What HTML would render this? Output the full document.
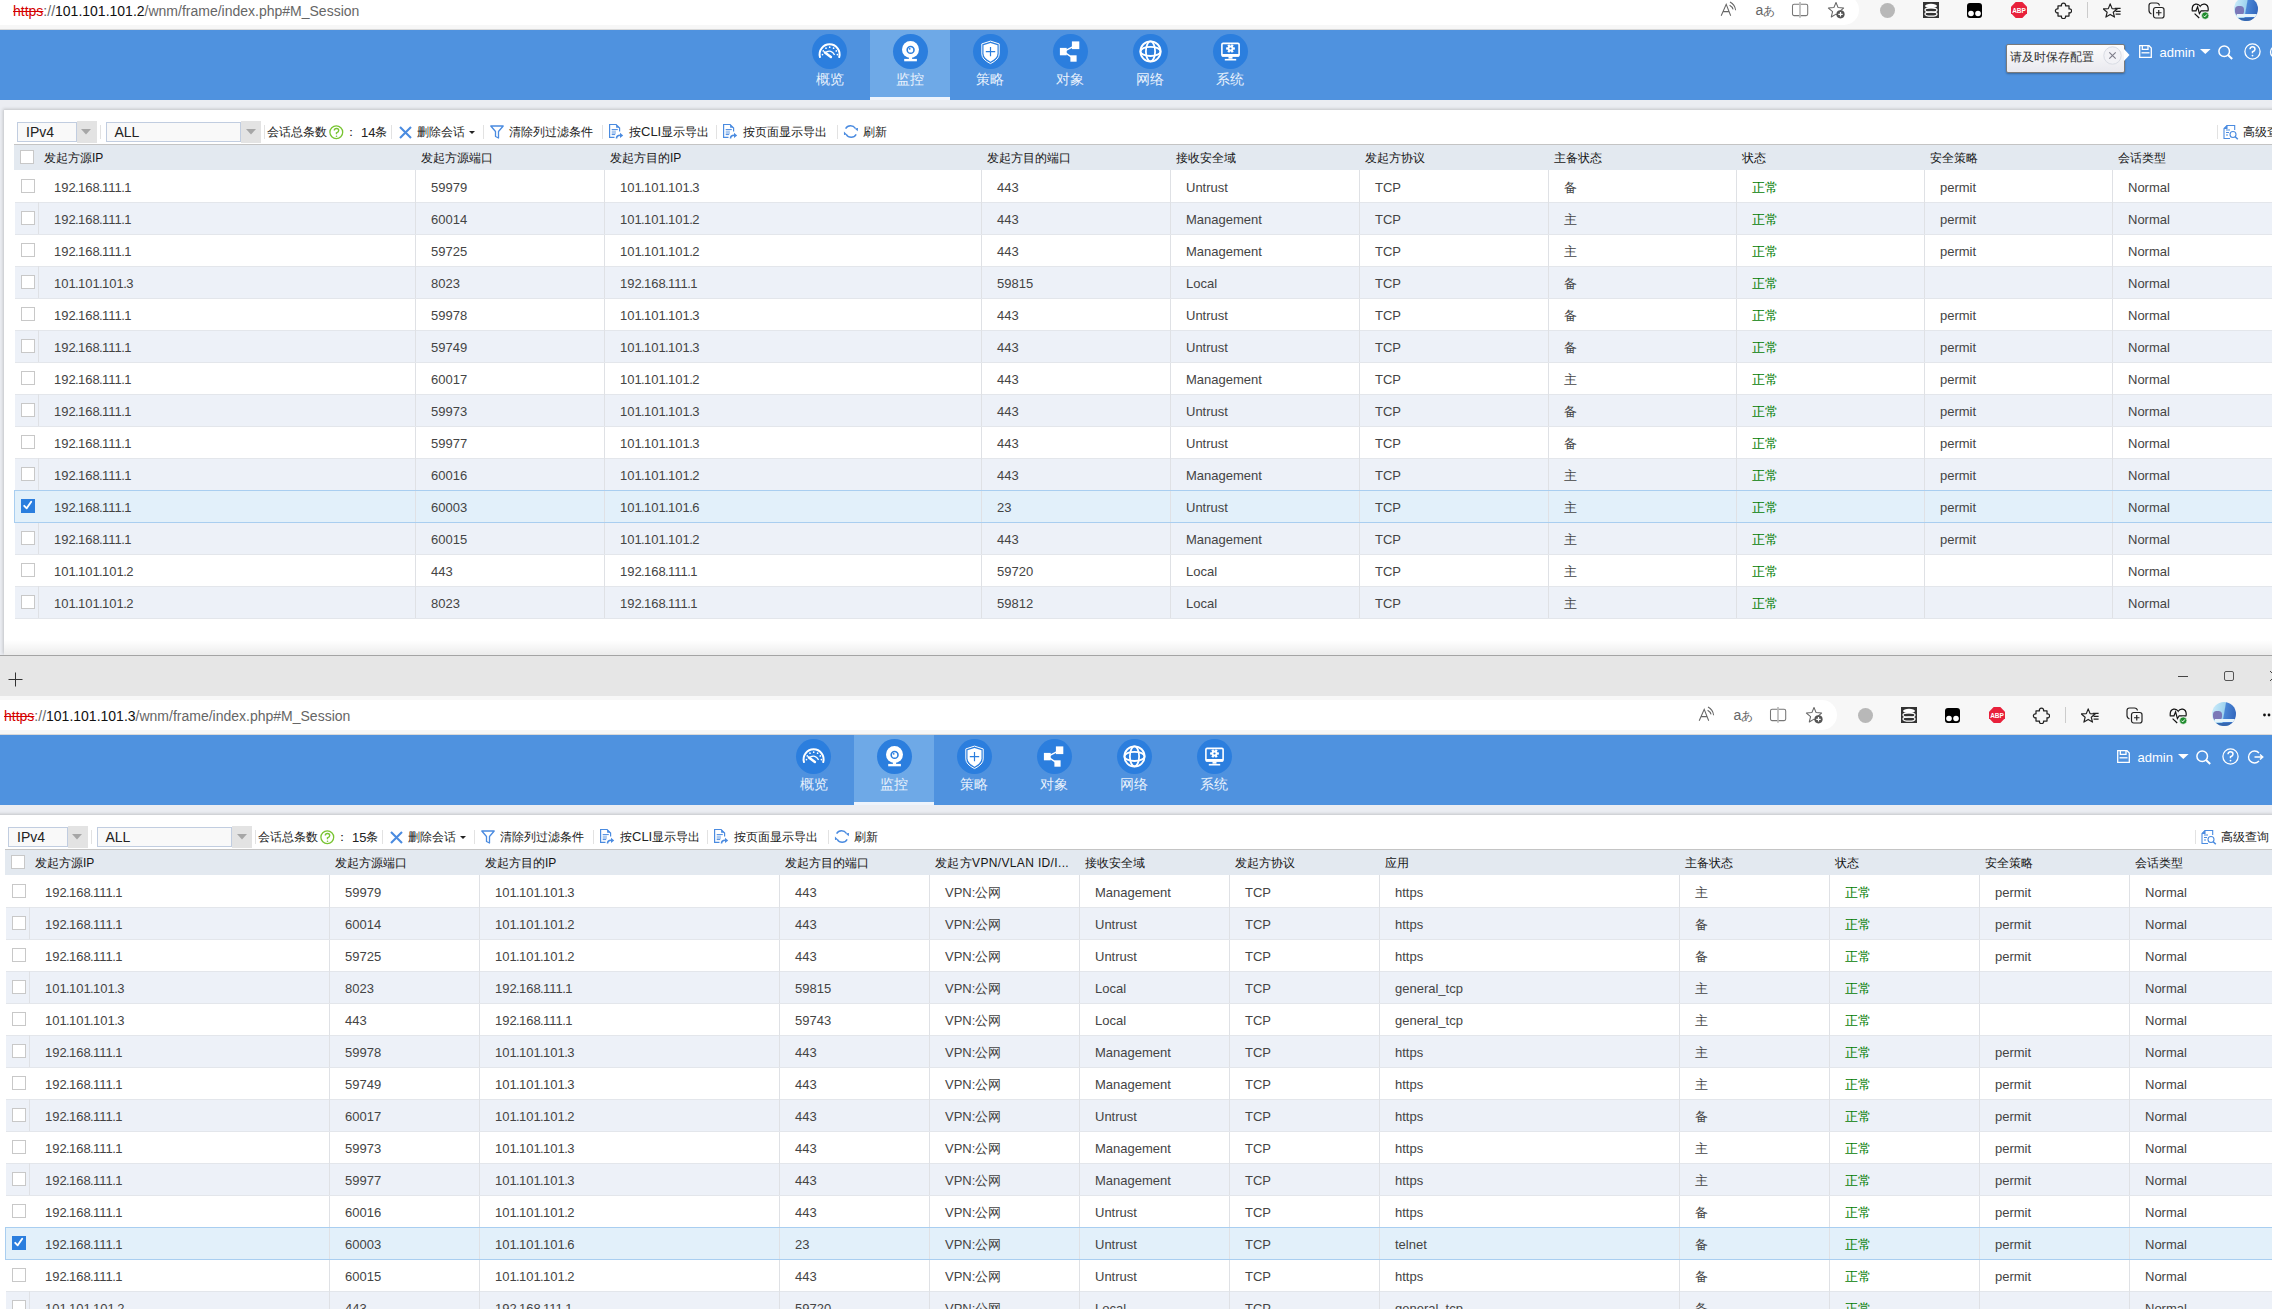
<!DOCTYPE html><html><head><meta charset="utf-8"><title>Session</title><style>
*{box-sizing:border-box}
html,body{margin:0;padding:0}
body{width:2272px;height:1309px;overflow:hidden;position:relative;background:#fff;font-family:"Liberation Sans", sans-serif;color:#333}
.a{position:absolute}
.t{position:absolute;white-space:nowrap;line-height:1}
.row{position:absolute;height:32px}
.cell{position:absolute;top:2px;height:32px;line-height:32px;font-size:13px;white-space:nowrap;color:#444}
.vs{position:absolute;top:0;width:1px;height:32px;background:#dfe1e5}
.hd{position:absolute;top:0;height:25px;line-height:27px;font-size:12px;white-space:nowrap;color:#161616}
.cb{position:absolute;width:14px;height:14px;border:1px solid #c8c8c8;background:#fff}
.g{color:#037d03}
i{font-style:normal;margin:0 -0.65px}
.nav{position:absolute;width:80px;height:70px}
.circ{position:absolute;left:22px;top:4px;width:35px;height:35px;border-radius:50%;background:#2b7ede}
.navl{position:absolute;left:0;width:80px;top:43px;text-align:center;font-size:14px;line-height:14px;color:#eaf2fc}
.sep{position:absolute;width:1px;height:14px;background:#e2e2e2}
.tb{position:absolute;font-size:12px;line-height:12px;white-space:nowrap;color:#222}
</style></head><body>
<div class="a" style="left:0;top:0px;width:2272px;height:655px;overflow:hidden">
<div class="a" style="left:0;top:-9px;width:2272px;height:39px;background:#f7f7f7"></div>
<div class="a" style="left:-100px;top:-5px;width:1958.5px;height:30px;background:#fff;border-radius:15px"></div>
<div class="a" style="left:0;top:29px;width:2272px;height:1px;background:#d9d9d9"></div>
<div class="t" style="left:13px;top:3px;font-size:14px;line-height:16px;color:#666"><span style="color:#d40000;text-decoration:line-through">https</span>://<span style="color:#111">101.101.101.2</span>/wnm/frame/index.php#M_Session</div>
<svg class="a" style="left:1716px;top:0px" width="22" height="20" viewBox="0 0 22 20" fill="none" stroke="#666" stroke-width="1.05"><path d="M5.2 15.7 L10.2 4.4 L14.7 15.7 M7.1 11.6 H12.9"/><path d="M14 2 Q19 4.5 19.6 10.3"/><path d="M13.6 5.2 Q16.6 6.8 17.1 9.4"/></svg>
<div class="t" style="left:1755.5px;top:2px;font-size:14px;line-height:16px;color:#666">a<span style="font-size:11.5px">あ</span></div>
<svg class="a" style="left:1790px;top:0px" width="20" height="20" viewBox="0 0 20 20" fill="none"><rect x="2.5" y="4.3" width="15.2" height="11.3" rx="1.6" stroke="#777" stroke-width="1.05"/><path d="M10 2 V17.8" stroke="#bbb" stroke-width="1.7"/></svg>
<svg class="a" style="left:1826px;top:0px" width="22" height="20" viewBox="0 0 22 20" fill="none" stroke="#666" stroke-width="1.05"><path d="M10 2.5 L12.12 7.59 L17.61 8.03 L13.42 11.61 L14.7 16.97 L10 14.1 L5.3 16.97 L6.58 11.61 L2.39 8.03 L7.88 7.59 Z" stroke-linejoin="round"/><circle cx="14.5" cy="14.3" r="4.1" fill="#555" stroke="none"/><path d="M14.5 12.1 V16.5 M12.3 14.3 H16.7" stroke="#fff" stroke-width="1.2"/></svg>
<div class="a" style="left:1880px;top:3px;width:15px;height:15px;border-radius:50%;background:#b8b8b8"></div>
<svg class="a" style="left:1923px;top:2px" width="16" height="16" viewBox="0 0 16 16"><rect x="0" y="0" width="16" height="16" fill="#333"/><ellipse cx="8" cy="4" rx="6" ry="2.2" fill="#fff"/><ellipse cx="8" cy="8" rx="6" ry="2.2" fill="none" stroke="#fff" stroke-width="1.3"/><ellipse cx="8" cy="12" rx="6" ry="2.2" fill="none" stroke="#fff" stroke-width="1.3"/></svg>
<svg class="a" style="left:1967px;top:3px" width="15" height="15" viewBox="0 0 15 15"><rect x="0" y="0" width="15" height="15" rx="3" fill="#000"/><circle cx="4" cy="10.5" r="2.8" fill="#fff"/><circle cx="11" cy="10.5" r="2.8" fill="#fff"/></svg>
<svg class="a" style="left:2011px;top:2px" width="16" height="16" viewBox="0 0 16 16"><path d="M4.7 0 H11.3 L16 4.7 V11.3 L11.3 16 H4.7 L0 11.3 V4.7 Z" fill="#e8213b"/><text x="8" y="10.8" font-size="6.5" font-weight="bold" text-anchor="middle" fill="#fff" font-family="Liberation Sans">ABP</text></svg>
<svg class="a" style="left:2054px;top:1px" width="18" height="18" viewBox="0 0 18 18" fill="none" stroke="#222" stroke-width="1.25" stroke-linejoin="round"><path d="M4 4.8 H7.5 A2.1 2.1 0 1 1 11.5 4.8 H15 V7.9 A2 2 0 1 1 15 11.7 V15 H11.5 A2.1 2.1 0 1 1 7.5 15 H4 V11.7 A2 2 0 1 1 4 7.9 Z"/></svg>
<div class="a" style="left:2087px;top:2px;width:1px;height:16px;background:#ccc"></div>
<svg class="a" style="left:2103px;top:1px" width="19" height="19" viewBox="0 0 19 19" fill="none" stroke="#222" stroke-width="1.2" stroke-linejoin="round"><path d="M7.20 2.90 L9.08 7.61 L14.14 7.94 L10.24 11.19 L11.49 16.11 L7.20 13.40 L2.91 16.11 L4.16 11.19 L0.26 7.94 L5.32 7.61 Z"/><path d="M11.8 7.4 H17.6 M12.6 10.3 H17.6 M12.6 13.2 H17.6"/></svg>
<svg class="a" style="left:2148px;top:2px" width="17" height="17" viewBox="0 0 17 17" fill="none" stroke="#222" stroke-width="1.2"><path d="M3.5 12 Q1 11 1 8.5 V3.5 Q1 1 3.5 1 H8.5 Q11 1 11.5 3.5"/><rect x="5.5" y="5.5" width="10.5" height="10.5" rx="2.2"/><path d="M10.75 8 V13.5 M8 10.75 H13.5"/></svg>
<svg class="a" style="left:2191px;top:1px" width="19" height="19" viewBox="0 0 19 19" fill="none" stroke="#111" stroke-width="1.2"><path d="M1.3 9.6 Q0.6 4.2 4.6 3.2 Q7.6 2.6 9.2 5.3 Q10.8 2.6 13.8 3.2 Q17.8 4.2 17.1 9.6"/><path d="M0.8 9.8 H5 L6.6 5.8 L8.4 12.6 L10.2 9.8 H17.4"/><path d="M3.6 12.6 L8.2 17"/><circle cx="14.2" cy="14.6" r="3.7" fill="#1e8c2c" stroke="#f7f7f7" stroke-width="0.7"/><path d="M12.5 14.7 L13.7 15.9 L15.9 13.4" stroke="#fff" stroke-width="1"/></svg>
<div class="a" style="left:2234px;top:-3px;width:24px;height:24px;border-radius:50%;background:linear-gradient(100deg,#cfeefb 0%,#9fd3ef 48%,#4a86d6 52%,#2f62b8 100%);overflow:hidden"><div style="position:absolute;left:1px;top:9px;width:9px;height:9px;border-radius:40%;background:#7b78b8"></div><div style="position:absolute;left:3px;top:17px;width:20px;height:3px;background:#e6f4fb"></div><div style="position:absolute;left:0;top:21px;width:24px;height:3px;background:#3567b0"></div></div>
<svg class="a" style="left:2285px;top:8px" width="20" height="4" viewBox="0 0 20 4"><circle cx="1.5" cy="2" r="1.4" fill="#111"/><circle cx="6" cy="2" r="1.4" fill="#111"/><circle cx="10.5" cy="2" r="1.4" fill="#111"/></svg>
<div class="a" style="left:0;top:30px;width:2272px;height:70px;background:#4f92df"></div>
<div class="a" style="left:812.0px;top:34px;width:35px;height:35px;border-radius:50%;background:#2b7ede"></div>
<svg class="a" style="left:812.0px;top:34px" width="35" height="35" viewBox="-17.5 -17.4 35 35"><path d="M-9.5 5.7 A10 10 0 1 1 9.7 5.7" fill="none" stroke="#fff" stroke-width="2" stroke-linecap="round"/><g fill="#fff"><circle cx="-7" cy="3.2" r="0.85"/><circle cx="-6.2" cy="-0.5" r="0.85"/><circle cx="-3.5" cy="-3.2" r="0.85"/><circle cx="0.2" cy="-4.2" r="0.85"/><circle cx="4.1" cy="-3.2" r="0.85"/><circle cx="6.8" cy="-0.5" r="0.85"/><circle cx="7.9" cy="3.2" r="0.85"/></g><path d="M-3.3 0.8 Q1.5 -2.3 5.1 3.4" fill="none" stroke="#fff" stroke-width="1.4"/><path d="M-4.6 1 L1.4 5.6" stroke="#fff" stroke-width="2.5" stroke-linecap="round"/></svg>
<div class="t" style="left:790px;top:72px;width:80px;text-align:center;font-size:14px;line-height:14px;color:#e8f1fc">概览</div>
<div class="a" style="left:870px;top:30px;width:80px;height:70px;background:#6ea9e7"></div>
<div class="a" style="left:870px;top:97px;width:80px;height:3px;background:#eef4fc"></div>
<div class="a" style="left:893.0px;top:34px;width:35px;height:35px;border-radius:50%;background:#2b7ede"></div>
<svg class="a" style="left:893.0px;top:34px" width="35" height="35" viewBox="-17.5 -17.4 35 35"><circle cx="0" cy="-1.8" r="8.5" fill="#fff"/><circle cx="0.1" cy="-1.5" r="3.4" fill="none" stroke="#2b7ede" stroke-width="1.6"/><circle cx="-0.8" cy="-2.6" r="0.9" fill="#2b7ede"/><rect x="-1.6" y="5" width="3.2" height="3" fill="#fff"/><rect x="-6.3" y="7.5" width="12.7" height="2.4" fill="#fff"/></svg>
<div class="t" style="left:870px;top:72px;width:80px;text-align:center;font-size:14px;line-height:14px;color:#e8f1fc">监控</div>
<div class="a" style="left:973.0px;top:34px;width:35px;height:35px;border-radius:50%;background:#2b7ede"></div>
<svg class="a" style="left:973.0px;top:34px" width="35" height="35" viewBox="-17.5 -17.4 35 35"><path d="M0 -10.3 L8.7 -7.5 V2.5 Q8.7 8 0 12.2 Q-8.7 8 -8.7 2.5 V-7.5 Z" fill="none" stroke="#fff" stroke-width="1"/><path d="M0 -8.5 L7 -6.2 V2.2 Q7 6.8 0 10.3 Q-7 6.8 -7 2.2 V-6.2 Z" fill="#fff"/><path d="M0 -4.5 V4.8 M-4.7 0.3 H4.7" stroke="#2b7ede" stroke-width="1.2"/></svg>
<div class="t" style="left:950px;top:72px;width:80px;text-align:center;font-size:14px;line-height:14px;color:#e8f1fc">策略</div>
<div class="a" style="left:1053.0px;top:34px;width:35px;height:35px;border-radius:50%;background:#2b7ede"></div>
<svg class="a" style="left:1053.0px;top:34px" width="35" height="35" viewBox="-17.5 -17.4 35 35"><path d="M-7 0.2 L5 -6 M-7 0.2 L3 7" stroke="#fff" stroke-width="1.3"/><rect x="1.4" y="-10" width="7.4" height="7.7" fill="#fff"/><rect x="-10.6" y="-3.5" width="6.8" height="7.4" fill="#fff"/><rect x="-0.1" y="3.9" width="6.2" height="6.4" fill="#fff"/></svg>
<div class="t" style="left:1030px;top:72px;width:80px;text-align:center;font-size:14px;line-height:14px;color:#e8f1fc">对象</div>
<div class="a" style="left:1133.0px;top:34px;width:35px;height:35px;border-radius:50%;background:#2b7ede"></div>
<svg class="a" style="left:1133.0px;top:34px" width="35" height="35" viewBox="-17.5 -17.4 35 35"><g fill="none" stroke="#fff" stroke-width="1.8"><circle cx="0" cy="0" r="10.1"/><ellipse cx="0" cy="0" rx="4.6" ry="10"/><ellipse cx="0" cy="0" rx="10" ry="4.6"/></g></svg>
<div class="t" style="left:1110px;top:72px;width:80px;text-align:center;font-size:14px;line-height:14px;color:#e8f1fc">网络</div>
<div class="a" style="left:1213.0px;top:34px;width:35px;height:35px;border-radius:50%;background:#2b7ede"></div>
<svg class="a" style="left:1213.0px;top:34px" width="35" height="35" viewBox="-17.5 -17.4 35 35"><rect x="-8.6" y="-8" width="17.2" height="12.6" rx="1.2" fill="none" stroke="#fff" stroke-width="1.6"/><rect x="-8.6" y="2.6" width="17.2" height="2.6" fill="#fff"/><rect x="-2" y="5" width="4" height="2.3" fill="#fff"/><rect x="-5.7" y="7.5" width="11.4" height="1.6" fill="#fff"/><g transform="translate(0,-2.9)"><circle r="3" fill="#fff"/><rect x="-1.1" y="-4.4" width="2.2" height="2" fill="#fff" transform="rotate(30)"/><rect x="-1.1" y="-4.4" width="2.2" height="2" fill="#fff" transform="rotate(90)"/><rect x="-1.1" y="-4.4" width="2.2" height="2" fill="#fff" transform="rotate(150)"/><rect x="-1.1" y="-4.4" width="2.2" height="2" fill="#fff" transform="rotate(210)"/><rect x="-1.1" y="-4.4" width="2.2" height="2" fill="#fff" transform="rotate(270)"/><rect x="-1.1" y="-4.4" width="2.2" height="2" fill="#fff" transform="rotate(330)"/><circle r="1.1" fill="#2b7ede"/></g></svg>
<div class="t" style="left:1190px;top:72px;width:80px;text-align:center;font-size:14px;line-height:14px;color:#e8f1fc">系统</div>
<div class="a" style="left:2005.5px;top:43.5px;width:119px;height:29px;border:1px solid #7a7a7a;border-radius:2px;background:linear-gradient(#fdfdfd,#e9e9ef);box-shadow:0 1px 2px rgba(0,0,0,0.3)"></div>
<svg class="a" style="left:2124px;top:49px" width="6" height="12" viewBox="0 0 6 12"><path d="M0 0 L5.5 6 L0 12 Z" fill="#fff"/></svg>
<div class="t" style="left:2010px;top:51px;font-size:12px;line-height:12px;color:#333">请及时保存配置</div>
<svg class="a" style="left:2102.5px;top:46px" width="19" height="19" viewBox="0 0 19 19"><circle cx="9.5" cy="9.5" r="8.7" fill="#f2f2f6" stroke="#d8dbe3" stroke-width="1"/><path d="M6.3 6.3 L12.7 12.7 M12.7 6.3 L6.3 12.7" stroke="#7c7c88" stroke-width="1.1"/></svg>
<svg class="a" style="left:2139px;top:45px" width="13" height="13" viewBox="0 0 13 13" fill="none" stroke="#fff" stroke-width="1.3"><path d="M0.7 0.7 H10 L12.3 3 V12.3 H0.7 Z"/><path d="M3.3 0.7 V4.3 H9 V0.7"/><path d="M2.5 7.8 H10.5"/></svg>
<div class="t" style="left:2159.5px;top:45.5px;font-size:13px;line-height:14px;color:#fff">admin</div>
<svg class="a" style="left:2200px;top:49px" width="11" height="5" viewBox="0 0 11 5"><path d="M0 0 H10.6 L5.3 5 Z" fill="#fff"/></svg>
<svg class="a" style="left:2217.5px;top:44.5px" width="16" height="15" viewBox="0 0 16 15" fill="none" stroke="#fff" stroke-width="1.5"><circle cx="6.2" cy="6.2" r="5.3"/><path d="M10 10 L14.2 14" stroke-width="2"/></svg>
<svg class="a" style="left:2243.5px;top:42.8px" width="17" height="17" viewBox="0 0 17 17" fill="none" stroke="#fff" stroke-width="1.3"><circle cx="8.5" cy="8.5" r="7.6"/><path d="M6 6.3 Q6 3.8 8.5 3.8 Q11 3.8 11 6.2 Q11 7.8 8.5 8.8 V10.3" stroke-width="1.5"/><circle cx="8.5" cy="12.6" r="0.9" fill="#fff" stroke="none"/></svg>
<svg class="a" style="left:2268.5px;top:44.5px" width="17" height="14" viewBox="0 0 17 14" fill="none" stroke="#fff" stroke-width="1.4"><path d="M12 3 A6 6 0 1 0 12 11"/><path d="M7.5 7 H15.5 M13 4.5 L15.8 7 L13 9.5"/></svg>
<div class="a" style="left:0;top:100px;width:2272px;height:655px;background:#ebedf2"></div>
<div class="a" style="left:4px;top:110px;width:2400px;height:545px;background:#fff;box-shadow:-1px -1px 3px rgba(0,0,0,0.18)"></div>
<div class="a" style="left:17px;top:122px;width:60px;height:20px;border:1px solid #c1cde0;background:#f9f9f9"></div>
<div class="t" style="left:26px;top:125px;font-size:14px;line-height:14px;color:#222">IPv4</div>
<div class="a" style="left:77px;top:121px;width:20px;height:22px;background:#e3e3e3"></div>
<svg class="a" style="left:81px;top:129px" width="10" height="6" viewBox="0 0 10 6"><path d="M0 0 H10 L5 5.5 Z" fill="#a6a6a6"/></svg>
<div class="sep" style="left:99.5px;top:125px"></div>
<div class="a" style="left:106px;top:122px;width:135px;height:20px;border:1px solid #c1cde0;background:#f9f9f9"></div>
<div class="t" style="left:114.5px;top:125px;font-size:14px;line-height:14px;color:#222">ALL</div>
<div class="a" style="left:241px;top:121px;width:20px;height:22px;background:#e3e3e3"></div>
<svg class="a" style="left:245.5px;top:129px" width="10" height="6" viewBox="0 0 10 6"><path d="M0 0 H10 L5 5.5 Z" fill="#a6a6a6"/></svg>
<div class="sep" style="left:263.5px;top:125px"></div>
<div class="tb" style="left:267px;top:126px">会话总条数</div>
<svg class="a" style="left:328.5px;top:124.5px" width="15" height="15" viewBox="0 0 15 15" fill="none" stroke="#78c431" stroke-width="1.3"><circle cx="7.3" cy="7.3" r="6.4"/><path d="M5.3 5.6 Q5.3 3.5 7.5 3.5 Q9.7 3.5 9.7 5.5 Q9.7 6.9 7.5 7.8 V9.2" stroke-width="1.4"/><circle cx="7.5" cy="11.3" r="0.8" fill="#7ac142" stroke="none"/></svg>
<div class="tb" style="left:345px;top:126px">：</div>
<div class="tb" style="left:361px;top:126px"><span style="font-size:13px;position:relative;top:1px">14</span>条</div>
<div class="sep" style="left:390.5px;top:125px"></div>
<svg class="a" style="left:398.5px;top:125.5px" width="13" height="13" viewBox="0 0 13 13"><path d="M1 1 L12 12 M12 1 L1 12" stroke="#4a8be0" stroke-width="2.1"/></svg>
<div class="tb" style="left:417px;top:126px">删除会话</div>
<svg class="a" style="left:469px;top:131px" width="6" height="3" viewBox="0 0 6 3"><path d="M0 0 H6 L3 3 Z" fill="#222"/></svg>
<div class="sep" style="left:482.5px;top:125px"></div>
<svg class="a" style="left:490px;top:124.5px" width="14" height="14" viewBox="0 0 14 14" fill="none" stroke="#4a8be0" stroke-width="1.3"><path d="M0.8 1 H13.2 L8.5 6.5 V13 L5.5 11.5 V6.5 Z" stroke-linejoin="round"/></svg>
<div class="tb" style="left:509px;top:126px">清除列过滤条件</div>
<div class="sep" style="left:601.5px;top:125px"></div>
<svg class="a" style="left:604px;top:120px" width="20" height="20" viewBox="0 0 20 20"><path d="M10.5 17.3 H5.6 V4.5 H12.1 L15.6 8 V11.4" fill="none" stroke="#4a8be0" stroke-width="1.2"/><path d="M12.1 4.5 V7.7 H15.6 Z" fill="#4a8be0"/><path d="M7.7 9.6 H13.8 M7.7 14.6 H11.2" stroke="#4a8be0" stroke-width="1"/><rect x="7.7" y="10.6" width="4.2" height="3.4" fill="#4a8be0" opacity="0.45"/><path d="M12.5 18.6 Q12.5 15.3 16.2 15.3" fill="none" stroke="#4a8be0" stroke-width="1.6"/><path d="M16 12.7 L19.2 15.4 L16 18 Z" fill="#4a8be0"/></svg>
<div class="tb" style="left:629px;top:126px">按<span style="font-size:13px">CLI</span>显示导出</div>
<div class="sep" style="left:716px;top:125px"></div>
<svg class="a" style="left:718.3px;top:120px" width="20" height="20" viewBox="0 0 20 20"><path d="M10.5 17.3 H5.6 V4.5 H12.1 L15.6 8 V11.4" fill="none" stroke="#4a8be0" stroke-width="1.2"/><path d="M12.1 4.5 V7.7 H15.6 Z" fill="#4a8be0"/><path d="M7.7 9.6 H13.8 M7.7 14.6 H11.2" stroke="#4a8be0" stroke-width="1"/><rect x="7.7" y="10.6" width="4.2" height="3.4" fill="#4a8be0" opacity="0.45"/><path d="M12.5 18.6 Q12.5 15.3 16.2 15.3" fill="none" stroke="#4a8be0" stroke-width="1.6"/><path d="M16 12.7 L19.2 15.4 L16 18 Z" fill="#4a8be0"/></svg>
<div class="tb" style="left:743px;top:126px">按页面显示导出</div>
<div class="sep" style="left:836.5px;top:125px"></div>
<svg class="a" style="left:840px;top:120px" width="22" height="22" viewBox="0 0 22 22"><path d="M5.6 8.6 A5.8 5.8 0 0 1 15.4 8.4" fill="none" stroke="#4a8be0" stroke-width="1.4"/><path d="M14.6 8.4 L18 8.1 L17.8 11.3 Z" fill="#4a8be0"/><path d="M16.2 14.4 A5.8 5.8 0 0 1 6.2 14.4" fill="none" stroke="#4a8be0" stroke-width="1.4"/><path d="M7 14.5 L3.9 11.6 L4 15 Z" fill="#4a8be0"/></svg>
<div class="tb" style="left:862.5px;top:126px">刷新</div>
<div class="sep" style="left:2216.5px;top:125px"></div>
<svg class="a" style="left:2223px;top:124px" width="16" height="16" viewBox="0 0 16 16" fill="none" stroke="#4a8be0" stroke-width="1.1"><path d="M7 14.5 H1 V4.5 L4 1.5 H11.7 V6"/><path d="M1 4.5 H4 V1.5" fill="#4a8be0"/><path d="M3 6 H7 M3 8.5 H6 M3 11 H5"/><circle cx="10" cy="10.5" r="3"/><path d="M12.2 12.7 L14.8 15.3" stroke-width="1.5"/></svg>
<div class="tb" style="left:2243px;top:126px">高级查询</div>
<div class="a" style="left:14px;top:144px;width:2400px;height:1px;background:#c4c4c4"></div>
<div class="a" style="left:14px;top:145px;width:2400px;height:25px;background:#e3e9f0"></div>
<div class="cb" style="left:20px;top:150px"></div>
<div class="hd" style="left:44px;top:145px">发起方源IP</div>
<div class="hd" style="left:421px;top:145px">发起方源端口</div>
<div class="hd" style="left:610px;top:145px">发起方目的IP</div>
<div class="hd" style="left:987px;top:145px">发起方目的端口</div>
<div class="hd" style="left:1176px;top:145px">接收安全域</div>
<div class="hd" style="left:1365px;top:145px">发起方协议</div>
<div class="hd" style="left:1554px;top:145px">主备状态</div>
<div class="hd" style="left:1742px;top:145px">状态</div>
<div class="hd" style="left:1930px;top:145px">安全策略</div>
<div class="hd" style="left:2118px;top:145px">会话类型</div>
<div class="row" style="left:15px;top:170px;width:2400px;background:#ffffff">
<div class="vs" style="left:400px"></div>
<div class="vs" style="left:589px"></div>
<div class="vs" style="left:966px"></div>
<div class="vs" style="left:1155px"></div>
<div class="vs" style="left:1344px"></div>
<div class="vs" style="left:1533px"></div>
<div class="vs" style="left:1721px"></div>
<div class="vs" style="left:1909px"></div>
<div class="vs" style="left:2097px"></div>
<div class="cb" style="left:6px;top:9px"></div>
<div class="cell" style="left:39px">192<i>.</i>168<i>.</i>111<i>.</i>1</div>
<div class="cell" style="left:416px">59979</div>
<div class="cell" style="left:605px">101<i>.</i>101<i>.</i>101<i>.</i>3</div>
<div class="cell" style="left:982px">443</div>
<div class="cell" style="left:1171px">Untrust</div>
<div class="cell" style="left:1360px">TCP</div>
<div class="cell" style="left:1549px">备</div>
<div class="cell g" style="left:1737px">正常</div>
<div class="cell" style="left:1925px">permit</div>
<div class="cell" style="left:2113px">Normal</div>
</div>
<div class="row" style="left:15px;top:202px;width:2400px;background:#edf1f8">
<div class="a" style="left:0;top:0;width:2400px;height:1px;background:#e3e6eb"></div>
<div class="a" style="left:0;top:32px;width:2400px;height:1px;background:#e3e6eb;z-index:1"></div>
<div class="vs" style="left:23px"></div>
<div class="vs" style="left:400px"></div>
<div class="vs" style="left:589px"></div>
<div class="vs" style="left:966px"></div>
<div class="vs" style="left:1155px"></div>
<div class="vs" style="left:1344px"></div>
<div class="vs" style="left:1533px"></div>
<div class="vs" style="left:1721px"></div>
<div class="vs" style="left:1909px"></div>
<div class="vs" style="left:2097px"></div>
<div class="cb" style="left:6px;top:9px"></div>
<div class="cell" style="left:39px">192<i>.</i>168<i>.</i>111<i>.</i>1</div>
<div class="cell" style="left:416px">60014</div>
<div class="cell" style="left:605px">101<i>.</i>101<i>.</i>101<i>.</i>2</div>
<div class="cell" style="left:982px">443</div>
<div class="cell" style="left:1171px">Management</div>
<div class="cell" style="left:1360px">TCP</div>
<div class="cell" style="left:1549px">主</div>
<div class="cell g" style="left:1737px">正常</div>
<div class="cell" style="left:1925px">permit</div>
<div class="cell" style="left:2113px">Normal</div>
</div>
<div class="row" style="left:15px;top:234px;width:2400px;background:#ffffff">
<div class="vs" style="left:400px"></div>
<div class="vs" style="left:589px"></div>
<div class="vs" style="left:966px"></div>
<div class="vs" style="left:1155px"></div>
<div class="vs" style="left:1344px"></div>
<div class="vs" style="left:1533px"></div>
<div class="vs" style="left:1721px"></div>
<div class="vs" style="left:1909px"></div>
<div class="vs" style="left:2097px"></div>
<div class="cb" style="left:6px;top:9px"></div>
<div class="cell" style="left:39px">192<i>.</i>168<i>.</i>111<i>.</i>1</div>
<div class="cell" style="left:416px">59725</div>
<div class="cell" style="left:605px">101<i>.</i>101<i>.</i>101<i>.</i>2</div>
<div class="cell" style="left:982px">443</div>
<div class="cell" style="left:1171px">Management</div>
<div class="cell" style="left:1360px">TCP</div>
<div class="cell" style="left:1549px">主</div>
<div class="cell g" style="left:1737px">正常</div>
<div class="cell" style="left:1925px">permit</div>
<div class="cell" style="left:2113px">Normal</div>
</div>
<div class="row" style="left:15px;top:266px;width:2400px;background:#edf1f8">
<div class="a" style="left:0;top:0;width:2400px;height:1px;background:#e3e6eb"></div>
<div class="a" style="left:0;top:32px;width:2400px;height:1px;background:#e3e6eb;z-index:1"></div>
<div class="vs" style="left:23px"></div>
<div class="vs" style="left:400px"></div>
<div class="vs" style="left:589px"></div>
<div class="vs" style="left:966px"></div>
<div class="vs" style="left:1155px"></div>
<div class="vs" style="left:1344px"></div>
<div class="vs" style="left:1533px"></div>
<div class="vs" style="left:1721px"></div>
<div class="vs" style="left:1909px"></div>
<div class="vs" style="left:2097px"></div>
<div class="cb" style="left:6px;top:9px"></div>
<div class="cell" style="left:39px">101<i>.</i>101<i>.</i>101<i>.</i>3</div>
<div class="cell" style="left:416px">8023</div>
<div class="cell" style="left:605px">192<i>.</i>168<i>.</i>111<i>.</i>1</div>
<div class="cell" style="left:982px">59815</div>
<div class="cell" style="left:1171px">Local</div>
<div class="cell" style="left:1360px">TCP</div>
<div class="cell" style="left:1549px">备</div>
<div class="cell g" style="left:1737px">正常</div>
<div class="cell" style="left:2113px">Normal</div>
</div>
<div class="row" style="left:15px;top:298px;width:2400px;background:#ffffff">
<div class="vs" style="left:400px"></div>
<div class="vs" style="left:589px"></div>
<div class="vs" style="left:966px"></div>
<div class="vs" style="left:1155px"></div>
<div class="vs" style="left:1344px"></div>
<div class="vs" style="left:1533px"></div>
<div class="vs" style="left:1721px"></div>
<div class="vs" style="left:1909px"></div>
<div class="vs" style="left:2097px"></div>
<div class="cb" style="left:6px;top:9px"></div>
<div class="cell" style="left:39px">192<i>.</i>168<i>.</i>111<i>.</i>1</div>
<div class="cell" style="left:416px">59978</div>
<div class="cell" style="left:605px">101<i>.</i>101<i>.</i>101<i>.</i>3</div>
<div class="cell" style="left:982px">443</div>
<div class="cell" style="left:1171px">Untrust</div>
<div class="cell" style="left:1360px">TCP</div>
<div class="cell" style="left:1549px">备</div>
<div class="cell g" style="left:1737px">正常</div>
<div class="cell" style="left:1925px">permit</div>
<div class="cell" style="left:2113px">Normal</div>
</div>
<div class="row" style="left:15px;top:330px;width:2400px;background:#edf1f8">
<div class="a" style="left:0;top:0;width:2400px;height:1px;background:#e3e6eb"></div>
<div class="a" style="left:0;top:32px;width:2400px;height:1px;background:#e3e6eb;z-index:1"></div>
<div class="vs" style="left:23px"></div>
<div class="vs" style="left:400px"></div>
<div class="vs" style="left:589px"></div>
<div class="vs" style="left:966px"></div>
<div class="vs" style="left:1155px"></div>
<div class="vs" style="left:1344px"></div>
<div class="vs" style="left:1533px"></div>
<div class="vs" style="left:1721px"></div>
<div class="vs" style="left:1909px"></div>
<div class="vs" style="left:2097px"></div>
<div class="cb" style="left:6px;top:9px"></div>
<div class="cell" style="left:39px">192<i>.</i>168<i>.</i>111<i>.</i>1</div>
<div class="cell" style="left:416px">59749</div>
<div class="cell" style="left:605px">101<i>.</i>101<i>.</i>101<i>.</i>3</div>
<div class="cell" style="left:982px">443</div>
<div class="cell" style="left:1171px">Untrust</div>
<div class="cell" style="left:1360px">TCP</div>
<div class="cell" style="left:1549px">备</div>
<div class="cell g" style="left:1737px">正常</div>
<div class="cell" style="left:1925px">permit</div>
<div class="cell" style="left:2113px">Normal</div>
</div>
<div class="row" style="left:15px;top:362px;width:2400px;background:#ffffff">
<div class="vs" style="left:400px"></div>
<div class="vs" style="left:589px"></div>
<div class="vs" style="left:966px"></div>
<div class="vs" style="left:1155px"></div>
<div class="vs" style="left:1344px"></div>
<div class="vs" style="left:1533px"></div>
<div class="vs" style="left:1721px"></div>
<div class="vs" style="left:1909px"></div>
<div class="vs" style="left:2097px"></div>
<div class="cb" style="left:6px;top:9px"></div>
<div class="cell" style="left:39px">192<i>.</i>168<i>.</i>111<i>.</i>1</div>
<div class="cell" style="left:416px">60017</div>
<div class="cell" style="left:605px">101<i>.</i>101<i>.</i>101<i>.</i>2</div>
<div class="cell" style="left:982px">443</div>
<div class="cell" style="left:1171px">Management</div>
<div class="cell" style="left:1360px">TCP</div>
<div class="cell" style="left:1549px">主</div>
<div class="cell g" style="left:1737px">正常</div>
<div class="cell" style="left:1925px">permit</div>
<div class="cell" style="left:2113px">Normal</div>
</div>
<div class="row" style="left:15px;top:394px;width:2400px;background:#edf1f8">
<div class="a" style="left:0;top:0;width:2400px;height:1px;background:#e3e6eb"></div>
<div class="a" style="left:0;top:32px;width:2400px;height:1px;background:#e3e6eb;z-index:1"></div>
<div class="vs" style="left:23px"></div>
<div class="vs" style="left:400px"></div>
<div class="vs" style="left:589px"></div>
<div class="vs" style="left:966px"></div>
<div class="vs" style="left:1155px"></div>
<div class="vs" style="left:1344px"></div>
<div class="vs" style="left:1533px"></div>
<div class="vs" style="left:1721px"></div>
<div class="vs" style="left:1909px"></div>
<div class="vs" style="left:2097px"></div>
<div class="cb" style="left:6px;top:9px"></div>
<div class="cell" style="left:39px">192<i>.</i>168<i>.</i>111<i>.</i>1</div>
<div class="cell" style="left:416px">59973</div>
<div class="cell" style="left:605px">101<i>.</i>101<i>.</i>101<i>.</i>3</div>
<div class="cell" style="left:982px">443</div>
<div class="cell" style="left:1171px">Untrust</div>
<div class="cell" style="left:1360px">TCP</div>
<div class="cell" style="left:1549px">备</div>
<div class="cell g" style="left:1737px">正常</div>
<div class="cell" style="left:1925px">permit</div>
<div class="cell" style="left:2113px">Normal</div>
</div>
<div class="row" style="left:15px;top:426px;width:2400px;background:#ffffff">
<div class="vs" style="left:400px"></div>
<div class="vs" style="left:589px"></div>
<div class="vs" style="left:966px"></div>
<div class="vs" style="left:1155px"></div>
<div class="vs" style="left:1344px"></div>
<div class="vs" style="left:1533px"></div>
<div class="vs" style="left:1721px"></div>
<div class="vs" style="left:1909px"></div>
<div class="vs" style="left:2097px"></div>
<div class="cb" style="left:6px;top:9px"></div>
<div class="cell" style="left:39px">192<i>.</i>168<i>.</i>111<i>.</i>1</div>
<div class="cell" style="left:416px">59977</div>
<div class="cell" style="left:605px">101<i>.</i>101<i>.</i>101<i>.</i>3</div>
<div class="cell" style="left:982px">443</div>
<div class="cell" style="left:1171px">Untrust</div>
<div class="cell" style="left:1360px">TCP</div>
<div class="cell" style="left:1549px">备</div>
<div class="cell g" style="left:1737px">正常</div>
<div class="cell" style="left:1925px">permit</div>
<div class="cell" style="left:2113px">Normal</div>
</div>
<div class="row" style="left:15px;top:458px;width:2400px;background:#edf1f8">
<div class="a" style="left:0;top:0;width:2400px;height:1px;background:#e3e6eb"></div>
<div class="a" style="left:0;top:32px;width:2400px;height:1px;background:#e3e6eb;z-index:1"></div>
<div class="vs" style="left:23px"></div>
<div class="vs" style="left:400px"></div>
<div class="vs" style="left:589px"></div>
<div class="vs" style="left:966px"></div>
<div class="vs" style="left:1155px"></div>
<div class="vs" style="left:1344px"></div>
<div class="vs" style="left:1533px"></div>
<div class="vs" style="left:1721px"></div>
<div class="vs" style="left:1909px"></div>
<div class="vs" style="left:2097px"></div>
<div class="cb" style="left:6px;top:9px"></div>
<div class="cell" style="left:39px">192<i>.</i>168<i>.</i>111<i>.</i>1</div>
<div class="cell" style="left:416px">60016</div>
<div class="cell" style="left:605px">101<i>.</i>101<i>.</i>101<i>.</i>2</div>
<div class="cell" style="left:982px">443</div>
<div class="cell" style="left:1171px">Management</div>
<div class="cell" style="left:1360px">TCP</div>
<div class="cell" style="left:1549px">主</div>
<div class="cell g" style="left:1737px">正常</div>
<div class="cell" style="left:1925px">permit</div>
<div class="cell" style="left:2113px">Normal</div>
</div>
<div class="row" style="left:15px;top:490px;width:2400px;background:#e2f0fa">
<div class="a" style="left:-1px;top:0;width:2400px;height:33px;border:1px solid #a9cef0;z-index:2"></div>
<div class="vs" style="left:400px"></div>
<div class="vs" style="left:589px"></div>
<div class="vs" style="left:966px"></div>
<div class="vs" style="left:1155px"></div>
<div class="vs" style="left:1344px"></div>
<div class="vs" style="left:1533px"></div>
<div class="vs" style="left:1721px"></div>
<div class="vs" style="left:1909px"></div>
<div class="vs" style="left:2097px"></div>
<svg class="a" style="left:6px;top:9px" width="14" height="14" viewBox="0 0 14 14"><rect width="14" height="14" fill="#2b7ede"/><path d="M3.2 6.8 L5.7 9.3 L10.2 2.8" fill="none" stroke="#fff" stroke-width="1.9" stroke-linecap="round" stroke-linejoin="round"/></svg>
<div class="cell" style="left:39px">192<i>.</i>168<i>.</i>111<i>.</i>1</div>
<div class="cell" style="left:416px">60003</div>
<div class="cell" style="left:605px">101<i>.</i>101<i>.</i>101<i>.</i>6</div>
<div class="cell" style="left:982px">23</div>
<div class="cell" style="left:1171px">Untrust</div>
<div class="cell" style="left:1360px">TCP</div>
<div class="cell" style="left:1549px">主</div>
<div class="cell g" style="left:1737px">正常</div>
<div class="cell" style="left:1925px">permit</div>
<div class="cell" style="left:2113px">Normal</div>
</div>
<div class="row" style="left:15px;top:522px;width:2400px;background:#edf1f8">
<div class="a" style="left:0;top:0;width:2400px;height:1px;background:#e3e6eb"></div>
<div class="a" style="left:0;top:32px;width:2400px;height:1px;background:#e3e6eb;z-index:1"></div>
<div class="vs" style="left:23px"></div>
<div class="vs" style="left:400px"></div>
<div class="vs" style="left:589px"></div>
<div class="vs" style="left:966px"></div>
<div class="vs" style="left:1155px"></div>
<div class="vs" style="left:1344px"></div>
<div class="vs" style="left:1533px"></div>
<div class="vs" style="left:1721px"></div>
<div class="vs" style="left:1909px"></div>
<div class="vs" style="left:2097px"></div>
<div class="cb" style="left:6px;top:9px"></div>
<div class="cell" style="left:39px">192<i>.</i>168<i>.</i>111<i>.</i>1</div>
<div class="cell" style="left:416px">60015</div>
<div class="cell" style="left:605px">101<i>.</i>101<i>.</i>101<i>.</i>2</div>
<div class="cell" style="left:982px">443</div>
<div class="cell" style="left:1171px">Management</div>
<div class="cell" style="left:1360px">TCP</div>
<div class="cell" style="left:1549px">主</div>
<div class="cell g" style="left:1737px">正常</div>
<div class="cell" style="left:1925px">permit</div>
<div class="cell" style="left:2113px">Normal</div>
</div>
<div class="row" style="left:15px;top:554px;width:2400px;background:#ffffff">
<div class="vs" style="left:400px"></div>
<div class="vs" style="left:589px"></div>
<div class="vs" style="left:966px"></div>
<div class="vs" style="left:1155px"></div>
<div class="vs" style="left:1344px"></div>
<div class="vs" style="left:1533px"></div>
<div class="vs" style="left:1721px"></div>
<div class="vs" style="left:1909px"></div>
<div class="vs" style="left:2097px"></div>
<div class="cb" style="left:6px;top:9px"></div>
<div class="cell" style="left:39px">101<i>.</i>101<i>.</i>101<i>.</i>2</div>
<div class="cell" style="left:416px">443</div>
<div class="cell" style="left:605px">192<i>.</i>168<i>.</i>111<i>.</i>1</div>
<div class="cell" style="left:982px">59720</div>
<div class="cell" style="left:1171px">Local</div>
<div class="cell" style="left:1360px">TCP</div>
<div class="cell" style="left:1549px">主</div>
<div class="cell g" style="left:1737px">正常</div>
<div class="cell" style="left:2113px">Normal</div>
</div>
<div class="row" style="left:15px;top:586px;width:2400px;background:#edf1f8">
<div class="a" style="left:0;top:0;width:2400px;height:1px;background:#e3e6eb"></div>
<div class="a" style="left:0;top:32px;width:2400px;height:1px;background:#e3e6eb;z-index:1"></div>
<div class="vs" style="left:23px"></div>
<div class="vs" style="left:400px"></div>
<div class="vs" style="left:589px"></div>
<div class="vs" style="left:966px"></div>
<div class="vs" style="left:1155px"></div>
<div class="vs" style="left:1344px"></div>
<div class="vs" style="left:1533px"></div>
<div class="vs" style="left:1721px"></div>
<div class="vs" style="left:1909px"></div>
<div class="vs" style="left:2097px"></div>
<div class="cb" style="left:6px;top:9px"></div>
<div class="cell" style="left:39px">101<i>.</i>101<i>.</i>101<i>.</i>2</div>
<div class="cell" style="left:416px">8023</div>
<div class="cell" style="left:605px">192<i>.</i>168<i>.</i>111<i>.</i>1</div>
<div class="cell" style="left:982px">59812</div>
<div class="cell" style="left:1171px">Local</div>
<div class="cell" style="left:1360px">TCP</div>
<div class="cell" style="left:1549px">主</div>
<div class="cell g" style="left:1737px">正常</div>
<div class="cell" style="left:2113px">Normal</div>
</div>
</div>
<div class="a" style="left:4px;top:640px;width:2272px;height:15px;background:linear-gradient(rgba(0,0,0,0),rgba(0,0,0,0.075))"></div>
<div class="a" style="left:0;top:655px;width:2272px;height:1px;background:#a4a4a4"></div>
<div class="a" style="left:0;top:656px;width:2272px;height:40px;background:#e6e6e6"></div>
<svg class="a" style="left:8px;top:672px" width="15" height="15" viewBox="0 0 15 15"><path d="M7.5 0.5 V14.5 M0.5 7.5 H14.5" stroke="#333" stroke-width="1"/></svg>
<div class="a" style="left:2178px;top:676px;width:10px;height:1px;background:#444"></div>
<div class="a" style="left:2224px;top:671px;width:10px;height:10px;border:1px solid #555;border-radius:2px"></div>
<svg class="a" style="left:2270px;top:671px" width="10" height="10" viewBox="0 0 10 10"><path d="M0 0 L10 10 M10 0 L0 10" stroke="#444" stroke-width="1"/></svg>
<div class="a" style="left:0;top:696px;width:2272px;height:613px;overflow:hidden">
<div class="a" style="left:0;top:0px;width:2272px;height:39px;background:#f7f7f7"></div>
<div class="a" style="left:-109px;top:4px;width:1945.5px;height:30px;background:#fff;border-radius:15px"></div>
<div class="a" style="left:0;top:38px;width:2272px;height:1px;background:#d9d9d9"></div>
<div class="t" style="left:4px;top:12px;font-size:14px;line-height:16px;color:#666"><span style="color:#d40000;text-decoration:line-through">https</span>://<span style="color:#111">101.101.101.3</span>/wnm/frame/index.php#M_Session</div>
<svg class="a" style="left:1694px;top:9px" width="22" height="20" viewBox="0 0 22 20" fill="none" stroke="#666" stroke-width="1.05"><path d="M5.2 15.7 L10.2 4.4 L14.7 15.7 M7.1 11.6 H12.9"/><path d="M14 2 Q19 4.5 19.6 10.3"/><path d="M13.6 5.2 Q16.6 6.8 17.1 9.4"/></svg>
<div class="t" style="left:1733.5px;top:11px;font-size:14px;line-height:16px;color:#666">a<span style="font-size:11.5px">あ</span></div>
<svg class="a" style="left:1768px;top:9px" width="20" height="20" viewBox="0 0 20 20" fill="none"><rect x="2.5" y="4.3" width="15.2" height="11.3" rx="1.6" stroke="#777" stroke-width="1.05"/><path d="M10 2 V17.8" stroke="#bbb" stroke-width="1.7"/></svg>
<svg class="a" style="left:1804px;top:9px" width="22" height="20" viewBox="0 0 22 20" fill="none" stroke="#666" stroke-width="1.05"><path d="M10 2.5 L12.12 7.59 L17.61 8.03 L13.42 11.61 L14.7 16.97 L10 14.1 L5.3 16.97 L6.58 11.61 L2.39 8.03 L7.88 7.59 Z" stroke-linejoin="round"/><circle cx="14.5" cy="14.3" r="4.1" fill="#555" stroke="none"/><path d="M14.5 12.1 V16.5 M12.3 14.3 H16.7" stroke="#fff" stroke-width="1.2"/></svg>
<div class="a" style="left:1858px;top:12px;width:15px;height:15px;border-radius:50%;background:#b8b8b8"></div>
<svg class="a" style="left:1901px;top:11px" width="16" height="16" viewBox="0 0 16 16"><rect x="0" y="0" width="16" height="16" fill="#333"/><ellipse cx="8" cy="4" rx="6" ry="2.2" fill="#fff"/><ellipse cx="8" cy="8" rx="6" ry="2.2" fill="none" stroke="#fff" stroke-width="1.3"/><ellipse cx="8" cy="12" rx="6" ry="2.2" fill="none" stroke="#fff" stroke-width="1.3"/></svg>
<svg class="a" style="left:1945px;top:12px" width="15" height="15" viewBox="0 0 15 15"><rect x="0" y="0" width="15" height="15" rx="3" fill="#000"/><circle cx="4" cy="10.5" r="2.8" fill="#fff"/><circle cx="11" cy="10.5" r="2.8" fill="#fff"/></svg>
<svg class="a" style="left:1989px;top:11px" width="16" height="16" viewBox="0 0 16 16"><path d="M4.7 0 H11.3 L16 4.7 V11.3 L11.3 16 H4.7 L0 11.3 V4.7 Z" fill="#e8213b"/><text x="8" y="10.8" font-size="6.5" font-weight="bold" text-anchor="middle" fill="#fff" font-family="Liberation Sans">ABP</text></svg>
<svg class="a" style="left:2032px;top:10px" width="18" height="18" viewBox="0 0 18 18" fill="none" stroke="#222" stroke-width="1.25" stroke-linejoin="round"><path d="M4 4.8 H7.5 A2.1 2.1 0 1 1 11.5 4.8 H15 V7.9 A2 2 0 1 1 15 11.7 V15 H11.5 A2.1 2.1 0 1 1 7.5 15 H4 V11.7 A2 2 0 1 1 4 7.9 Z"/></svg>
<div class="a" style="left:2065px;top:11px;width:1px;height:16px;background:#ccc"></div>
<svg class="a" style="left:2081px;top:10px" width="19" height="19" viewBox="0 0 19 19" fill="none" stroke="#222" stroke-width="1.2" stroke-linejoin="round"><path d="M7.20 2.90 L9.08 7.61 L14.14 7.94 L10.24 11.19 L11.49 16.11 L7.20 13.40 L2.91 16.11 L4.16 11.19 L0.26 7.94 L5.32 7.61 Z"/><path d="M11.8 7.4 H17.6 M12.6 10.3 H17.6 M12.6 13.2 H17.6"/></svg>
<svg class="a" style="left:2126px;top:11px" width="17" height="17" viewBox="0 0 17 17" fill="none" stroke="#222" stroke-width="1.2"><path d="M3.5 12 Q1 11 1 8.5 V3.5 Q1 1 3.5 1 H8.5 Q11 1 11.5 3.5"/><rect x="5.5" y="5.5" width="10.5" height="10.5" rx="2.2"/><path d="M10.75 8 V13.5 M8 10.75 H13.5"/></svg>
<svg class="a" style="left:2169px;top:10px" width="19" height="19" viewBox="0 0 19 19" fill="none" stroke="#111" stroke-width="1.2"><path d="M1.3 9.6 Q0.6 4.2 4.6 3.2 Q7.6 2.6 9.2 5.3 Q10.8 2.6 13.8 3.2 Q17.8 4.2 17.1 9.6"/><path d="M0.8 9.8 H5 L6.6 5.8 L8.4 12.6 L10.2 9.8 H17.4"/><path d="M3.6 12.6 L8.2 17"/><circle cx="14.2" cy="14.6" r="3.7" fill="#1e8c2c" stroke="#f7f7f7" stroke-width="0.7"/><path d="M12.5 14.7 L13.7 15.9 L15.9 13.4" stroke="#fff" stroke-width="1"/></svg>
<div class="a" style="left:2212px;top:6px;width:24px;height:24px;border-radius:50%;background:linear-gradient(100deg,#cfeefb 0%,#9fd3ef 48%,#4a86d6 52%,#2f62b8 100%);overflow:hidden"><div style="position:absolute;left:1px;top:9px;width:9px;height:9px;border-radius:40%;background:#7b78b8"></div><div style="position:absolute;left:3px;top:17px;width:20px;height:3px;background:#e6f4fb"></div><div style="position:absolute;left:0;top:21px;width:24px;height:3px;background:#3567b0"></div></div>
<svg class="a" style="left:2263px;top:17px" width="20" height="4" viewBox="0 0 20 4"><circle cx="1.5" cy="2" r="1.4" fill="#111"/><circle cx="6" cy="2" r="1.4" fill="#111"/><circle cx="10.5" cy="2" r="1.4" fill="#111"/></svg>
<div class="a" style="left:0;top:39px;width:2272px;height:70px;background:#4f92df"></div>
<div class="a" style="left:796.0px;top:43px;width:35px;height:35px;border-radius:50%;background:#2b7ede"></div>
<svg class="a" style="left:796.0px;top:43px" width="35" height="35" viewBox="-17.5 -17.4 35 35"><path d="M-9.5 5.7 A10 10 0 1 1 9.7 5.7" fill="none" stroke="#fff" stroke-width="2" stroke-linecap="round"/><g fill="#fff"><circle cx="-7" cy="3.2" r="0.85"/><circle cx="-6.2" cy="-0.5" r="0.85"/><circle cx="-3.5" cy="-3.2" r="0.85"/><circle cx="0.2" cy="-4.2" r="0.85"/><circle cx="4.1" cy="-3.2" r="0.85"/><circle cx="6.8" cy="-0.5" r="0.85"/><circle cx="7.9" cy="3.2" r="0.85"/></g><path d="M-3.3 0.8 Q1.5 -2.3 5.1 3.4" fill="none" stroke="#fff" stroke-width="1.4"/><path d="M-4.6 1 L1.4 5.6" stroke="#fff" stroke-width="2.5" stroke-linecap="round"/></svg>
<div class="t" style="left:774px;top:81px;width:80px;text-align:center;font-size:14px;line-height:14px;color:#e8f1fc">概览</div>
<div class="a" style="left:854px;top:39px;width:80px;height:70px;background:#6ea9e7"></div>
<div class="a" style="left:854px;top:106px;width:80px;height:3px;background:#eef4fc"></div>
<div class="a" style="left:877.0px;top:43px;width:35px;height:35px;border-radius:50%;background:#2b7ede"></div>
<svg class="a" style="left:877.0px;top:43px" width="35" height="35" viewBox="-17.5 -17.4 35 35"><circle cx="0" cy="-1.8" r="8.5" fill="#fff"/><circle cx="0.1" cy="-1.5" r="3.4" fill="none" stroke="#2b7ede" stroke-width="1.6"/><circle cx="-0.8" cy="-2.6" r="0.9" fill="#2b7ede"/><rect x="-1.6" y="5" width="3.2" height="3" fill="#fff"/><rect x="-6.3" y="7.5" width="12.7" height="2.4" fill="#fff"/></svg>
<div class="t" style="left:854px;top:81px;width:80px;text-align:center;font-size:14px;line-height:14px;color:#e8f1fc">监控</div>
<div class="a" style="left:957.0px;top:43px;width:35px;height:35px;border-radius:50%;background:#2b7ede"></div>
<svg class="a" style="left:957.0px;top:43px" width="35" height="35" viewBox="-17.5 -17.4 35 35"><path d="M0 -10.3 L8.7 -7.5 V2.5 Q8.7 8 0 12.2 Q-8.7 8 -8.7 2.5 V-7.5 Z" fill="none" stroke="#fff" stroke-width="1"/><path d="M0 -8.5 L7 -6.2 V2.2 Q7 6.8 0 10.3 Q-7 6.8 -7 2.2 V-6.2 Z" fill="#fff"/><path d="M0 -4.5 V4.8 M-4.7 0.3 H4.7" stroke="#2b7ede" stroke-width="1.2"/></svg>
<div class="t" style="left:934px;top:81px;width:80px;text-align:center;font-size:14px;line-height:14px;color:#e8f1fc">策略</div>
<div class="a" style="left:1037.0px;top:43px;width:35px;height:35px;border-radius:50%;background:#2b7ede"></div>
<svg class="a" style="left:1037.0px;top:43px" width="35" height="35" viewBox="-17.5 -17.4 35 35"><path d="M-7 0.2 L5 -6 M-7 0.2 L3 7" stroke="#fff" stroke-width="1.3"/><rect x="1.4" y="-10" width="7.4" height="7.7" fill="#fff"/><rect x="-10.6" y="-3.5" width="6.8" height="7.4" fill="#fff"/><rect x="-0.1" y="3.9" width="6.2" height="6.4" fill="#fff"/></svg>
<div class="t" style="left:1014px;top:81px;width:80px;text-align:center;font-size:14px;line-height:14px;color:#e8f1fc">对象</div>
<div class="a" style="left:1117.0px;top:43px;width:35px;height:35px;border-radius:50%;background:#2b7ede"></div>
<svg class="a" style="left:1117.0px;top:43px" width="35" height="35" viewBox="-17.5 -17.4 35 35"><g fill="none" stroke="#fff" stroke-width="1.8"><circle cx="0" cy="0" r="10.1"/><ellipse cx="0" cy="0" rx="4.6" ry="10"/><ellipse cx="0" cy="0" rx="10" ry="4.6"/></g></svg>
<div class="t" style="left:1094px;top:81px;width:80px;text-align:center;font-size:14px;line-height:14px;color:#e8f1fc">网络</div>
<div class="a" style="left:1197.0px;top:43px;width:35px;height:35px;border-radius:50%;background:#2b7ede"></div>
<svg class="a" style="left:1197.0px;top:43px" width="35" height="35" viewBox="-17.5 -17.4 35 35"><rect x="-8.6" y="-8" width="17.2" height="12.6" rx="1.2" fill="none" stroke="#fff" stroke-width="1.6"/><rect x="-8.6" y="2.6" width="17.2" height="2.6" fill="#fff"/><rect x="-2" y="5" width="4" height="2.3" fill="#fff"/><rect x="-5.7" y="7.5" width="11.4" height="1.6" fill="#fff"/><g transform="translate(0,-2.9)"><circle r="3" fill="#fff"/><rect x="-1.1" y="-4.4" width="2.2" height="2" fill="#fff" transform="rotate(30)"/><rect x="-1.1" y="-4.4" width="2.2" height="2" fill="#fff" transform="rotate(90)"/><rect x="-1.1" y="-4.4" width="2.2" height="2" fill="#fff" transform="rotate(150)"/><rect x="-1.1" y="-4.4" width="2.2" height="2" fill="#fff" transform="rotate(210)"/><rect x="-1.1" y="-4.4" width="2.2" height="2" fill="#fff" transform="rotate(270)"/><rect x="-1.1" y="-4.4" width="2.2" height="2" fill="#fff" transform="rotate(330)"/><circle r="1.1" fill="#2b7ede"/></g></svg>
<div class="t" style="left:1174px;top:81px;width:80px;text-align:center;font-size:14px;line-height:14px;color:#e8f1fc">系统</div>
<svg class="a" style="left:2117px;top:54px" width="13" height="13" viewBox="0 0 13 13" fill="none" stroke="#fff" stroke-width="1.3"><path d="M0.7 0.7 H10 L12.3 3 V12.3 H0.7 Z"/><path d="M3.3 0.7 V4.3 H9 V0.7"/><path d="M2.5 7.8 H10.5"/></svg>
<div class="t" style="left:2137.5px;top:54.5px;font-size:13px;line-height:14px;color:#fff">admin</div>
<svg class="a" style="left:2178px;top:58px" width="11" height="5" viewBox="0 0 11 5"><path d="M0 0 H10.6 L5.3 5 Z" fill="#fff"/></svg>
<svg class="a" style="left:2195.5px;top:53.5px" width="16" height="15" viewBox="0 0 16 15" fill="none" stroke="#fff" stroke-width="1.5"><circle cx="6.2" cy="6.2" r="5.3"/><path d="M10 10 L14.2 14" stroke-width="2"/></svg>
<svg class="a" style="left:2221.5px;top:51.8px" width="17" height="17" viewBox="0 0 17 17" fill="none" stroke="#fff" stroke-width="1.3"><circle cx="8.5" cy="8.5" r="7.6"/><path d="M6 6.3 Q6 3.8 8.5 3.8 Q11 3.8 11 6.2 Q11 7.8 8.5 8.8 V10.3" stroke-width="1.5"/><circle cx="8.5" cy="12.6" r="0.9" fill="#fff" stroke="none"/></svg>
<svg class="a" style="left:2246.5px;top:53.5px" width="17" height="14" viewBox="0 0 17 14" fill="none" stroke="#fff" stroke-width="1.4"><path d="M12 3 A6 6 0 1 0 12 11"/><path d="M7.5 7 H15.5 M13 4.5 L15.8 7 L13 9.5"/></svg>
<div class="a" style="left:0;top:109px;width:2272px;height:604px;background:#ebedf2"></div>
<div class="a" style="left:-5px;top:119px;width:2400px;height:545px;background:#fff;box-shadow:-1px -1px 3px rgba(0,0,0,0.18)"></div>
<div class="a" style="left:8px;top:131px;width:60px;height:20px;border:1px solid #c1cde0;background:#f9f9f9"></div>
<div class="t" style="left:17px;top:134px;font-size:14px;line-height:14px;color:#222">IPv4</div>
<div class="a" style="left:68px;top:130px;width:20px;height:22px;background:#e3e3e3"></div>
<svg class="a" style="left:72px;top:138px" width="10" height="6" viewBox="0 0 10 6"><path d="M0 0 H10 L5 5.5 Z" fill="#a6a6a6"/></svg>
<div class="sep" style="left:90.5px;top:134px"></div>
<div class="a" style="left:97px;top:131px;width:135px;height:20px;border:1px solid #c1cde0;background:#f9f9f9"></div>
<div class="t" style="left:105.5px;top:134px;font-size:14px;line-height:14px;color:#222">ALL</div>
<div class="a" style="left:232px;top:130px;width:20px;height:22px;background:#e3e3e3"></div>
<svg class="a" style="left:236.5px;top:138px" width="10" height="6" viewBox="0 0 10 6"><path d="M0 0 H10 L5 5.5 Z" fill="#a6a6a6"/></svg>
<div class="sep" style="left:254.5px;top:134px"></div>
<div class="tb" style="left:258px;top:135px">会话总条数</div>
<svg class="a" style="left:319.5px;top:133.5px" width="15" height="15" viewBox="0 0 15 15" fill="none" stroke="#78c431" stroke-width="1.3"><circle cx="7.3" cy="7.3" r="6.4"/><path d="M5.3 5.6 Q5.3 3.5 7.5 3.5 Q9.7 3.5 9.7 5.5 Q9.7 6.9 7.5 7.8 V9.2" stroke-width="1.4"/><circle cx="7.5" cy="11.3" r="0.8" fill="#7ac142" stroke="none"/></svg>
<div class="tb" style="left:336px;top:135px">：</div>
<div class="tb" style="left:352px;top:135px"><span style="font-size:13px;position:relative;top:1px">15</span>条</div>
<div class="sep" style="left:381.5px;top:134px"></div>
<svg class="a" style="left:389.5px;top:134.5px" width="13" height="13" viewBox="0 0 13 13"><path d="M1 1 L12 12 M12 1 L1 12" stroke="#4a8be0" stroke-width="2.1"/></svg>
<div class="tb" style="left:408px;top:135px">删除会话</div>
<svg class="a" style="left:460px;top:140px" width="6" height="3" viewBox="0 0 6 3"><path d="M0 0 H6 L3 3 Z" fill="#222"/></svg>
<div class="sep" style="left:473.5px;top:134px"></div>
<svg class="a" style="left:481px;top:133.5px" width="14" height="14" viewBox="0 0 14 14" fill="none" stroke="#4a8be0" stroke-width="1.3"><path d="M0.8 1 H13.2 L8.5 6.5 V13 L5.5 11.5 V6.5 Z" stroke-linejoin="round"/></svg>
<div class="tb" style="left:500px;top:135px">清除列过滤条件</div>
<div class="sep" style="left:592.5px;top:134px"></div>
<svg class="a" style="left:595px;top:129px" width="20" height="20" viewBox="0 0 20 20"><path d="M10.5 17.3 H5.6 V4.5 H12.1 L15.6 8 V11.4" fill="none" stroke="#4a8be0" stroke-width="1.2"/><path d="M12.1 4.5 V7.7 H15.6 Z" fill="#4a8be0"/><path d="M7.7 9.6 H13.8 M7.7 14.6 H11.2" stroke="#4a8be0" stroke-width="1"/><rect x="7.7" y="10.6" width="4.2" height="3.4" fill="#4a8be0" opacity="0.45"/><path d="M12.5 18.6 Q12.5 15.3 16.2 15.3" fill="none" stroke="#4a8be0" stroke-width="1.6"/><path d="M16 12.7 L19.2 15.4 L16 18 Z" fill="#4a8be0"/></svg>
<div class="tb" style="left:620px;top:135px">按<span style="font-size:13px">CLI</span>显示导出</div>
<div class="sep" style="left:707px;top:134px"></div>
<svg class="a" style="left:709.3px;top:129px" width="20" height="20" viewBox="0 0 20 20"><path d="M10.5 17.3 H5.6 V4.5 H12.1 L15.6 8 V11.4" fill="none" stroke="#4a8be0" stroke-width="1.2"/><path d="M12.1 4.5 V7.7 H15.6 Z" fill="#4a8be0"/><path d="M7.7 9.6 H13.8 M7.7 14.6 H11.2" stroke="#4a8be0" stroke-width="1"/><rect x="7.7" y="10.6" width="4.2" height="3.4" fill="#4a8be0" opacity="0.45"/><path d="M12.5 18.6 Q12.5 15.3 16.2 15.3" fill="none" stroke="#4a8be0" stroke-width="1.6"/><path d="M16 12.7 L19.2 15.4 L16 18 Z" fill="#4a8be0"/></svg>
<div class="tb" style="left:734px;top:135px">按页面显示导出</div>
<div class="sep" style="left:827.5px;top:134px"></div>
<svg class="a" style="left:831px;top:129px" width="22" height="22" viewBox="0 0 22 22"><path d="M5.6 8.6 A5.8 5.8 0 0 1 15.4 8.4" fill="none" stroke="#4a8be0" stroke-width="1.4"/><path d="M14.6 8.4 L18 8.1 L17.8 11.3 Z" fill="#4a8be0"/><path d="M16.2 14.4 A5.8 5.8 0 0 1 6.2 14.4" fill="none" stroke="#4a8be0" stroke-width="1.4"/><path d="M7 14.5 L3.9 11.6 L4 15 Z" fill="#4a8be0"/></svg>
<div class="tb" style="left:853.5px;top:135px">刷新</div>
<div class="sep" style="left:2194.5px;top:134px"></div>
<svg class="a" style="left:2201px;top:133px" width="16" height="16" viewBox="0 0 16 16" fill="none" stroke="#4a8be0" stroke-width="1.1"><path d="M7 14.5 H1 V4.5 L4 1.5 H11.7 V6"/><path d="M1 4.5 H4 V1.5" fill="#4a8be0"/><path d="M3 6 H7 M3 8.5 H6 M3 11 H5"/><circle cx="10" cy="10.5" r="3"/><path d="M12.2 12.7 L14.8 15.3" stroke-width="1.5"/></svg>
<div class="tb" style="left:2221px;top:135px">高级查询</div>
<div class="a" style="left:5px;top:153px;width:2400px;height:1px;background:#c4c4c4"></div>
<div class="a" style="left:5px;top:154px;width:2400px;height:25px;background:#e3e9f0"></div>
<div class="cb" style="left:11px;top:159px"></div>
<div class="hd" style="left:35px;top:154px">发起方源IP</div>
<div class="hd" style="left:335px;top:154px">发起方源端口</div>
<div class="hd" style="left:485px;top:154px">发起方目的IP</div>
<div class="hd" style="left:785px;top:154px">发起方目的端口</div>
<div class="hd" style="left:935px;top:154px;letter-spacing:0.35px">发起方VPN/VLAN ID/I...</div>
<div class="hd" style="left:1085px;top:154px">接收安全域</div>
<div class="hd" style="left:1235px;top:154px">发起方协议</div>
<div class="hd" style="left:1385px;top:154px">应用</div>
<div class="hd" style="left:1685px;top:154px">主备状态</div>
<div class="hd" style="left:1835px;top:154px">状态</div>
<div class="hd" style="left:1985px;top:154px">安全策略</div>
<div class="hd" style="left:2135px;top:154px">会话类型</div>
<div class="row" style="left:6px;top:179px;width:2400px;background:#ffffff">
<div class="vs" style="left:323px"></div>
<div class="vs" style="left:473px"></div>
<div class="vs" style="left:773px"></div>
<div class="vs" style="left:923px"></div>
<div class="vs" style="left:1073px"></div>
<div class="vs" style="left:1223px"></div>
<div class="vs" style="left:1373px"></div>
<div class="vs" style="left:1673px"></div>
<div class="vs" style="left:1823px"></div>
<div class="vs" style="left:1973px"></div>
<div class="vs" style="left:2123px"></div>
<div class="cb" style="left:6px;top:9px"></div>
<div class="cell" style="left:39px">192<i>.</i>168<i>.</i>111<i>.</i>1</div>
<div class="cell" style="left:339px">59979</div>
<div class="cell" style="left:489px">101<i>.</i>101<i>.</i>101<i>.</i>3</div>
<div class="cell" style="left:789px">443</div>
<div class="cell" style="left:939px">VPN:公网</div>
<div class="cell" style="left:1089px">Management</div>
<div class="cell" style="left:1239px">TCP</div>
<div class="cell" style="left:1389px">https</div>
<div class="cell" style="left:1689px">主</div>
<div class="cell g" style="left:1839px">正常</div>
<div class="cell" style="left:1989px">permit</div>
<div class="cell" style="left:2139px">Normal</div>
</div>
<div class="row" style="left:6px;top:211px;width:2400px;background:#edf1f8">
<div class="a" style="left:0;top:0;width:2400px;height:1px;background:#e3e6eb"></div>
<div class="a" style="left:0;top:32px;width:2400px;height:1px;background:#e3e6eb;z-index:1"></div>
<div class="vs" style="left:23px"></div>
<div class="vs" style="left:323px"></div>
<div class="vs" style="left:473px"></div>
<div class="vs" style="left:773px"></div>
<div class="vs" style="left:923px"></div>
<div class="vs" style="left:1073px"></div>
<div class="vs" style="left:1223px"></div>
<div class="vs" style="left:1373px"></div>
<div class="vs" style="left:1673px"></div>
<div class="vs" style="left:1823px"></div>
<div class="vs" style="left:1973px"></div>
<div class="vs" style="left:2123px"></div>
<div class="cb" style="left:6px;top:9px"></div>
<div class="cell" style="left:39px">192<i>.</i>168<i>.</i>111<i>.</i>1</div>
<div class="cell" style="left:339px">60014</div>
<div class="cell" style="left:489px">101<i>.</i>101<i>.</i>101<i>.</i>2</div>
<div class="cell" style="left:789px">443</div>
<div class="cell" style="left:939px">VPN:公网</div>
<div class="cell" style="left:1089px">Untrust</div>
<div class="cell" style="left:1239px">TCP</div>
<div class="cell" style="left:1389px">https</div>
<div class="cell" style="left:1689px">备</div>
<div class="cell g" style="left:1839px">正常</div>
<div class="cell" style="left:1989px">permit</div>
<div class="cell" style="left:2139px">Normal</div>
</div>
<div class="row" style="left:6px;top:243px;width:2400px;background:#ffffff">
<div class="vs" style="left:323px"></div>
<div class="vs" style="left:473px"></div>
<div class="vs" style="left:773px"></div>
<div class="vs" style="left:923px"></div>
<div class="vs" style="left:1073px"></div>
<div class="vs" style="left:1223px"></div>
<div class="vs" style="left:1373px"></div>
<div class="vs" style="left:1673px"></div>
<div class="vs" style="left:1823px"></div>
<div class="vs" style="left:1973px"></div>
<div class="vs" style="left:2123px"></div>
<div class="cb" style="left:6px;top:9px"></div>
<div class="cell" style="left:39px">192<i>.</i>168<i>.</i>111<i>.</i>1</div>
<div class="cell" style="left:339px">59725</div>
<div class="cell" style="left:489px">101<i>.</i>101<i>.</i>101<i>.</i>2</div>
<div class="cell" style="left:789px">443</div>
<div class="cell" style="left:939px">VPN:公网</div>
<div class="cell" style="left:1089px">Untrust</div>
<div class="cell" style="left:1239px">TCP</div>
<div class="cell" style="left:1389px">https</div>
<div class="cell" style="left:1689px">备</div>
<div class="cell g" style="left:1839px">正常</div>
<div class="cell" style="left:1989px">permit</div>
<div class="cell" style="left:2139px">Normal</div>
</div>
<div class="row" style="left:6px;top:275px;width:2400px;background:#edf1f8">
<div class="a" style="left:0;top:0;width:2400px;height:1px;background:#e3e6eb"></div>
<div class="a" style="left:0;top:32px;width:2400px;height:1px;background:#e3e6eb;z-index:1"></div>
<div class="vs" style="left:23px"></div>
<div class="vs" style="left:323px"></div>
<div class="vs" style="left:473px"></div>
<div class="vs" style="left:773px"></div>
<div class="vs" style="left:923px"></div>
<div class="vs" style="left:1073px"></div>
<div class="vs" style="left:1223px"></div>
<div class="vs" style="left:1373px"></div>
<div class="vs" style="left:1673px"></div>
<div class="vs" style="left:1823px"></div>
<div class="vs" style="left:1973px"></div>
<div class="vs" style="left:2123px"></div>
<div class="cb" style="left:6px;top:9px"></div>
<div class="cell" style="left:39px">101<i>.</i>101<i>.</i>101<i>.</i>3</div>
<div class="cell" style="left:339px">8023</div>
<div class="cell" style="left:489px">192<i>.</i>168<i>.</i>111<i>.</i>1</div>
<div class="cell" style="left:789px">59815</div>
<div class="cell" style="left:939px">VPN:公网</div>
<div class="cell" style="left:1089px">Local</div>
<div class="cell" style="left:1239px">TCP</div>
<div class="cell" style="left:1389px">general_tcp</div>
<div class="cell" style="left:1689px">主</div>
<div class="cell g" style="left:1839px">正常</div>
<div class="cell" style="left:2139px">Normal</div>
</div>
<div class="row" style="left:6px;top:307px;width:2400px;background:#ffffff">
<div class="vs" style="left:323px"></div>
<div class="vs" style="left:473px"></div>
<div class="vs" style="left:773px"></div>
<div class="vs" style="left:923px"></div>
<div class="vs" style="left:1073px"></div>
<div class="vs" style="left:1223px"></div>
<div class="vs" style="left:1373px"></div>
<div class="vs" style="left:1673px"></div>
<div class="vs" style="left:1823px"></div>
<div class="vs" style="left:1973px"></div>
<div class="vs" style="left:2123px"></div>
<div class="cb" style="left:6px;top:9px"></div>
<div class="cell" style="left:39px">101<i>.</i>101<i>.</i>101<i>.</i>3</div>
<div class="cell" style="left:339px">443</div>
<div class="cell" style="left:489px">192<i>.</i>168<i>.</i>111<i>.</i>1</div>
<div class="cell" style="left:789px">59743</div>
<div class="cell" style="left:939px">VPN:公网</div>
<div class="cell" style="left:1089px">Local</div>
<div class="cell" style="left:1239px">TCP</div>
<div class="cell" style="left:1389px">general_tcp</div>
<div class="cell" style="left:1689px">主</div>
<div class="cell g" style="left:1839px">正常</div>
<div class="cell" style="left:2139px">Normal</div>
</div>
<div class="row" style="left:6px;top:339px;width:2400px;background:#edf1f8">
<div class="a" style="left:0;top:0;width:2400px;height:1px;background:#e3e6eb"></div>
<div class="a" style="left:0;top:32px;width:2400px;height:1px;background:#e3e6eb;z-index:1"></div>
<div class="vs" style="left:23px"></div>
<div class="vs" style="left:323px"></div>
<div class="vs" style="left:473px"></div>
<div class="vs" style="left:773px"></div>
<div class="vs" style="left:923px"></div>
<div class="vs" style="left:1073px"></div>
<div class="vs" style="left:1223px"></div>
<div class="vs" style="left:1373px"></div>
<div class="vs" style="left:1673px"></div>
<div class="vs" style="left:1823px"></div>
<div class="vs" style="left:1973px"></div>
<div class="vs" style="left:2123px"></div>
<div class="cb" style="left:6px;top:9px"></div>
<div class="cell" style="left:39px">192<i>.</i>168<i>.</i>111<i>.</i>1</div>
<div class="cell" style="left:339px">59978</div>
<div class="cell" style="left:489px">101<i>.</i>101<i>.</i>101<i>.</i>3</div>
<div class="cell" style="left:789px">443</div>
<div class="cell" style="left:939px">VPN:公网</div>
<div class="cell" style="left:1089px">Management</div>
<div class="cell" style="left:1239px">TCP</div>
<div class="cell" style="left:1389px">https</div>
<div class="cell" style="left:1689px">主</div>
<div class="cell g" style="left:1839px">正常</div>
<div class="cell" style="left:1989px">permit</div>
<div class="cell" style="left:2139px">Normal</div>
</div>
<div class="row" style="left:6px;top:371px;width:2400px;background:#ffffff">
<div class="vs" style="left:323px"></div>
<div class="vs" style="left:473px"></div>
<div class="vs" style="left:773px"></div>
<div class="vs" style="left:923px"></div>
<div class="vs" style="left:1073px"></div>
<div class="vs" style="left:1223px"></div>
<div class="vs" style="left:1373px"></div>
<div class="vs" style="left:1673px"></div>
<div class="vs" style="left:1823px"></div>
<div class="vs" style="left:1973px"></div>
<div class="vs" style="left:2123px"></div>
<div class="cb" style="left:6px;top:9px"></div>
<div class="cell" style="left:39px">192<i>.</i>168<i>.</i>111<i>.</i>1</div>
<div class="cell" style="left:339px">59749</div>
<div class="cell" style="left:489px">101<i>.</i>101<i>.</i>101<i>.</i>3</div>
<div class="cell" style="left:789px">443</div>
<div class="cell" style="left:939px">VPN:公网</div>
<div class="cell" style="left:1089px">Management</div>
<div class="cell" style="left:1239px">TCP</div>
<div class="cell" style="left:1389px">https</div>
<div class="cell" style="left:1689px">主</div>
<div class="cell g" style="left:1839px">正常</div>
<div class="cell" style="left:1989px">permit</div>
<div class="cell" style="left:2139px">Normal</div>
</div>
<div class="row" style="left:6px;top:403px;width:2400px;background:#edf1f8">
<div class="a" style="left:0;top:0;width:2400px;height:1px;background:#e3e6eb"></div>
<div class="a" style="left:0;top:32px;width:2400px;height:1px;background:#e3e6eb;z-index:1"></div>
<div class="vs" style="left:23px"></div>
<div class="vs" style="left:323px"></div>
<div class="vs" style="left:473px"></div>
<div class="vs" style="left:773px"></div>
<div class="vs" style="left:923px"></div>
<div class="vs" style="left:1073px"></div>
<div class="vs" style="left:1223px"></div>
<div class="vs" style="left:1373px"></div>
<div class="vs" style="left:1673px"></div>
<div class="vs" style="left:1823px"></div>
<div class="vs" style="left:1973px"></div>
<div class="vs" style="left:2123px"></div>
<div class="cb" style="left:6px;top:9px"></div>
<div class="cell" style="left:39px">192<i>.</i>168<i>.</i>111<i>.</i>1</div>
<div class="cell" style="left:339px">60017</div>
<div class="cell" style="left:489px">101<i>.</i>101<i>.</i>101<i>.</i>2</div>
<div class="cell" style="left:789px">443</div>
<div class="cell" style="left:939px">VPN:公网</div>
<div class="cell" style="left:1089px">Untrust</div>
<div class="cell" style="left:1239px">TCP</div>
<div class="cell" style="left:1389px">https</div>
<div class="cell" style="left:1689px">备</div>
<div class="cell g" style="left:1839px">正常</div>
<div class="cell" style="left:1989px">permit</div>
<div class="cell" style="left:2139px">Normal</div>
</div>
<div class="row" style="left:6px;top:435px;width:2400px;background:#ffffff">
<div class="vs" style="left:323px"></div>
<div class="vs" style="left:473px"></div>
<div class="vs" style="left:773px"></div>
<div class="vs" style="left:923px"></div>
<div class="vs" style="left:1073px"></div>
<div class="vs" style="left:1223px"></div>
<div class="vs" style="left:1373px"></div>
<div class="vs" style="left:1673px"></div>
<div class="vs" style="left:1823px"></div>
<div class="vs" style="left:1973px"></div>
<div class="vs" style="left:2123px"></div>
<div class="cb" style="left:6px;top:9px"></div>
<div class="cell" style="left:39px">192<i>.</i>168<i>.</i>111<i>.</i>1</div>
<div class="cell" style="left:339px">59973</div>
<div class="cell" style="left:489px">101<i>.</i>101<i>.</i>101<i>.</i>3</div>
<div class="cell" style="left:789px">443</div>
<div class="cell" style="left:939px">VPN:公网</div>
<div class="cell" style="left:1089px">Management</div>
<div class="cell" style="left:1239px">TCP</div>
<div class="cell" style="left:1389px">https</div>
<div class="cell" style="left:1689px">主</div>
<div class="cell g" style="left:1839px">正常</div>
<div class="cell" style="left:1989px">permit</div>
<div class="cell" style="left:2139px">Normal</div>
</div>
<div class="row" style="left:6px;top:467px;width:2400px;background:#edf1f8">
<div class="a" style="left:0;top:0;width:2400px;height:1px;background:#e3e6eb"></div>
<div class="a" style="left:0;top:32px;width:2400px;height:1px;background:#e3e6eb;z-index:1"></div>
<div class="vs" style="left:23px"></div>
<div class="vs" style="left:323px"></div>
<div class="vs" style="left:473px"></div>
<div class="vs" style="left:773px"></div>
<div class="vs" style="left:923px"></div>
<div class="vs" style="left:1073px"></div>
<div class="vs" style="left:1223px"></div>
<div class="vs" style="left:1373px"></div>
<div class="vs" style="left:1673px"></div>
<div class="vs" style="left:1823px"></div>
<div class="vs" style="left:1973px"></div>
<div class="vs" style="left:2123px"></div>
<div class="cb" style="left:6px;top:9px"></div>
<div class="cell" style="left:39px">192<i>.</i>168<i>.</i>111<i>.</i>1</div>
<div class="cell" style="left:339px">59977</div>
<div class="cell" style="left:489px">101<i>.</i>101<i>.</i>101<i>.</i>3</div>
<div class="cell" style="left:789px">443</div>
<div class="cell" style="left:939px">VPN:公网</div>
<div class="cell" style="left:1089px">Management</div>
<div class="cell" style="left:1239px">TCP</div>
<div class="cell" style="left:1389px">https</div>
<div class="cell" style="left:1689px">主</div>
<div class="cell g" style="left:1839px">正常</div>
<div class="cell" style="left:1989px">permit</div>
<div class="cell" style="left:2139px">Normal</div>
</div>
<div class="row" style="left:6px;top:499px;width:2400px;background:#ffffff">
<div class="vs" style="left:323px"></div>
<div class="vs" style="left:473px"></div>
<div class="vs" style="left:773px"></div>
<div class="vs" style="left:923px"></div>
<div class="vs" style="left:1073px"></div>
<div class="vs" style="left:1223px"></div>
<div class="vs" style="left:1373px"></div>
<div class="vs" style="left:1673px"></div>
<div class="vs" style="left:1823px"></div>
<div class="vs" style="left:1973px"></div>
<div class="vs" style="left:2123px"></div>
<div class="cb" style="left:6px;top:9px"></div>
<div class="cell" style="left:39px">192<i>.</i>168<i>.</i>111<i>.</i>1</div>
<div class="cell" style="left:339px">60016</div>
<div class="cell" style="left:489px">101<i>.</i>101<i>.</i>101<i>.</i>2</div>
<div class="cell" style="left:789px">443</div>
<div class="cell" style="left:939px">VPN:公网</div>
<div class="cell" style="left:1089px">Untrust</div>
<div class="cell" style="left:1239px">TCP</div>
<div class="cell" style="left:1389px">https</div>
<div class="cell" style="left:1689px">备</div>
<div class="cell g" style="left:1839px">正常</div>
<div class="cell" style="left:1989px">permit</div>
<div class="cell" style="left:2139px">Normal</div>
</div>
<div class="row" style="left:6px;top:531px;width:2400px;background:#e2f0fa">
<div class="a" style="left:-1px;top:0;width:2400px;height:33px;border:1px solid #a9cef0;z-index:2"></div>
<div class="vs" style="left:323px"></div>
<div class="vs" style="left:473px"></div>
<div class="vs" style="left:773px"></div>
<div class="vs" style="left:923px"></div>
<div class="vs" style="left:1073px"></div>
<div class="vs" style="left:1223px"></div>
<div class="vs" style="left:1373px"></div>
<div class="vs" style="left:1673px"></div>
<div class="vs" style="left:1823px"></div>
<div class="vs" style="left:1973px"></div>
<div class="vs" style="left:2123px"></div>
<svg class="a" style="left:6px;top:9px" width="14" height="14" viewBox="0 0 14 14"><rect width="14" height="14" fill="#2b7ede"/><path d="M3.2 6.8 L5.7 9.3 L10.2 2.8" fill="none" stroke="#fff" stroke-width="1.9" stroke-linecap="round" stroke-linejoin="round"/></svg>
<div class="cell" style="left:39px">192<i>.</i>168<i>.</i>111<i>.</i>1</div>
<div class="cell" style="left:339px">60003</div>
<div class="cell" style="left:489px">101<i>.</i>101<i>.</i>101<i>.</i>6</div>
<div class="cell" style="left:789px">23</div>
<div class="cell" style="left:939px">VPN:公网</div>
<div class="cell" style="left:1089px">Untrust</div>
<div class="cell" style="left:1239px">TCP</div>
<div class="cell" style="left:1389px">telnet</div>
<div class="cell" style="left:1689px">备</div>
<div class="cell g" style="left:1839px">正常</div>
<div class="cell" style="left:1989px">permit</div>
<div class="cell" style="left:2139px">Normal</div>
</div>
<div class="row" style="left:6px;top:563px;width:2400px;background:#ffffff">
<div class="vs" style="left:323px"></div>
<div class="vs" style="left:473px"></div>
<div class="vs" style="left:773px"></div>
<div class="vs" style="left:923px"></div>
<div class="vs" style="left:1073px"></div>
<div class="vs" style="left:1223px"></div>
<div class="vs" style="left:1373px"></div>
<div class="vs" style="left:1673px"></div>
<div class="vs" style="left:1823px"></div>
<div class="vs" style="left:1973px"></div>
<div class="vs" style="left:2123px"></div>
<div class="cb" style="left:6px;top:9px"></div>
<div class="cell" style="left:39px">192<i>.</i>168<i>.</i>111<i>.</i>1</div>
<div class="cell" style="left:339px">60015</div>
<div class="cell" style="left:489px">101<i>.</i>101<i>.</i>101<i>.</i>2</div>
<div class="cell" style="left:789px">443</div>
<div class="cell" style="left:939px">VPN:公网</div>
<div class="cell" style="left:1089px">Untrust</div>
<div class="cell" style="left:1239px">TCP</div>
<div class="cell" style="left:1389px">https</div>
<div class="cell" style="left:1689px">备</div>
<div class="cell g" style="left:1839px">正常</div>
<div class="cell" style="left:1989px">permit</div>
<div class="cell" style="left:2139px">Normal</div>
</div>
<div class="row" style="left:6px;top:595px;width:2400px;background:#edf1f8">
<div class="a" style="left:0;top:0;width:2400px;height:1px;background:#e3e6eb"></div>
<div class="a" style="left:0;top:32px;width:2400px;height:1px;background:#e3e6eb;z-index:1"></div>
<div class="vs" style="left:23px"></div>
<div class="vs" style="left:323px"></div>
<div class="vs" style="left:473px"></div>
<div class="vs" style="left:773px"></div>
<div class="vs" style="left:923px"></div>
<div class="vs" style="left:1073px"></div>
<div class="vs" style="left:1223px"></div>
<div class="vs" style="left:1373px"></div>
<div class="vs" style="left:1673px"></div>
<div class="vs" style="left:1823px"></div>
<div class="vs" style="left:1973px"></div>
<div class="vs" style="left:2123px"></div>
<div class="cb" style="left:6px;top:9px"></div>
<div class="cell" style="left:39px">101<i>.</i>101<i>.</i>101<i>.</i>2</div>
<div class="cell" style="left:339px">443</div>
<div class="cell" style="left:489px">192<i>.</i>168<i>.</i>111<i>.</i>1</div>
<div class="cell" style="left:789px">59720</div>
<div class="cell" style="left:939px">VPN:公网</div>
<div class="cell" style="left:1089px">Local</div>
<div class="cell" style="left:1239px">TCP</div>
<div class="cell" style="left:1389px">general_tcp</div>
<div class="cell" style="left:1689px">备</div>
<div class="cell g" style="left:1839px">正常</div>
<div class="cell" style="left:2139px">Normal</div>
</div>
</div>
</body></html>
